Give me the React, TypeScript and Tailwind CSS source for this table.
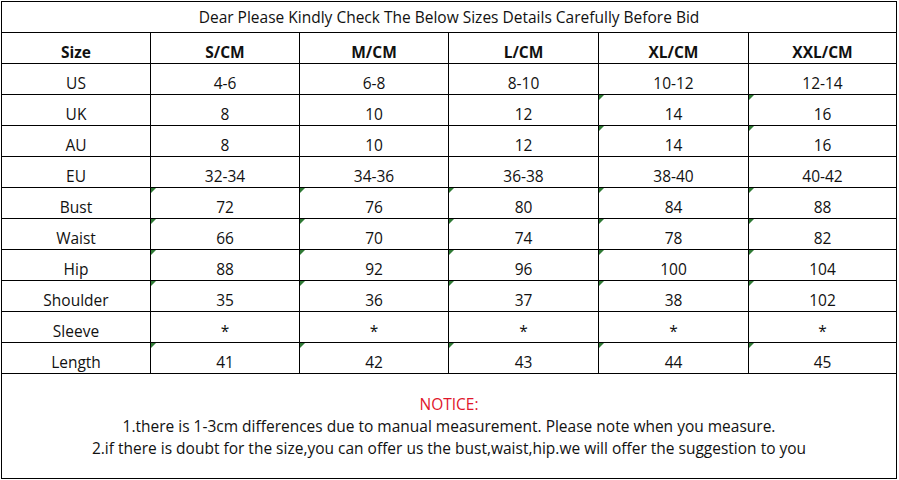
import { Fragment } from "react";

const cols = ["S/CM", "M/CM", "L/CM", "XL/CM", "XXL/CM"];

// flag: which data columns show the little green "number stored as text" corner
const rows: { label: string; values: string[]; flags: boolean[] }[] = [
  { label: "US", values: ["4-6", "6-8", "8-10", "10-12", "12-14"], flags: [false, false, false, false, false] },
  { label: "UK", values: ["8", "10", "12", "14", "16"], flags: [false, false, false, true, true] },
  { label: "AU", values: ["8", "10", "12", "14", "16"], flags: [false, false, false, true, true] },
  { label: "EU", values: ["32-34", "34-36", "36-38", "38-40", "40-42"], flags: [false, false, false, false, false] },
  { label: "Bust", values: ["72", "76", "80", "84", "88"], flags: [true, true, true, true, true] },
  { label: "Waist", values: ["66", "70", "74", "78", "82"], flags: [true, true, true, true, true] },
  { label: "Hip", values: ["88", "92", "96", "100", "104"], flags: [true, true, true, true, true] },
  { label: "Shoulder", values: ["35", "36", "37", "38", "102"], flags: [true, true, true, true, true] },
  { label: "Sleeve", values: ["*", "*", "*", "*", "*"], flags: [false, false, false, false, false] },
  { label: "Length", values: ["41", "42", "43", "44", "45"], flags: [true, true, true, true, true] },
];

function Cell({ children, last, flag, bold }: { children: React.ReactNode; last?: boolean; flag?: boolean; bold?: boolean }) {
  return (
    <div
      className={`relative h-[31px] border-b border-black pt-[9px] text-center leading-[20px] ${last ? "" : "border-r"} ${bold ? "font-bold" : ""}`}
    >
      {flag && (
        <span className="absolute left-0 top-0 h-0 w-0 border-t-[5px] border-r-[5px] border-t-[#2f7a35] border-r-transparent" />
      )}
      {children}
    </div>
  );
}

export default function App() {
  return (
    <div className="h-[480px] w-[899px] bg-white pl-px pt-px" style={{ fontFamily: '"Open Sans", sans-serif' }}>
      <div className="w-[896px] border border-black text-[15.5px] text-[#111]">
        <div className="h-[31px] border-b border-black pt-[5px] text-center leading-[20px]">
          Dear Please Kindly Check The Below Sizes Details Carefully Before Bid
        </div>

        <div className="grid grid-cols-[149px_149px_149px_150px_150px_147px]">
          <Cell bold>Size</Cell>
          {cols.map((c, i) => (
            <Cell key={c} bold last={i === cols.length - 1}>
              {c}
            </Cell>
          ))}

          {rows.map((r) => (
            <Fragment key={r.label}>
              <Cell>{r.label}</Cell>
              {r.values.map((v, i) => (
                <Cell key={i} flag={r.flags[i]} last={i === r.values.length - 1}>
                  {v}
                </Cell>
              ))}
            </Fragment>
          ))}
        </div>

        <div className="h-[104px] pt-[19px] text-center leading-[22px]">
          <p className="text-[#e0162b]">NOTICE:</p>
          <p>1.there is 1-3cm differences due to manual measurement. Please note when you measure.</p>
          <p>2.if there is doubt for the size,you can offer us the bust,waist,hip.we will offer the suggestion to you</p>
        </div>
      </div>
    </div>
  );
}
